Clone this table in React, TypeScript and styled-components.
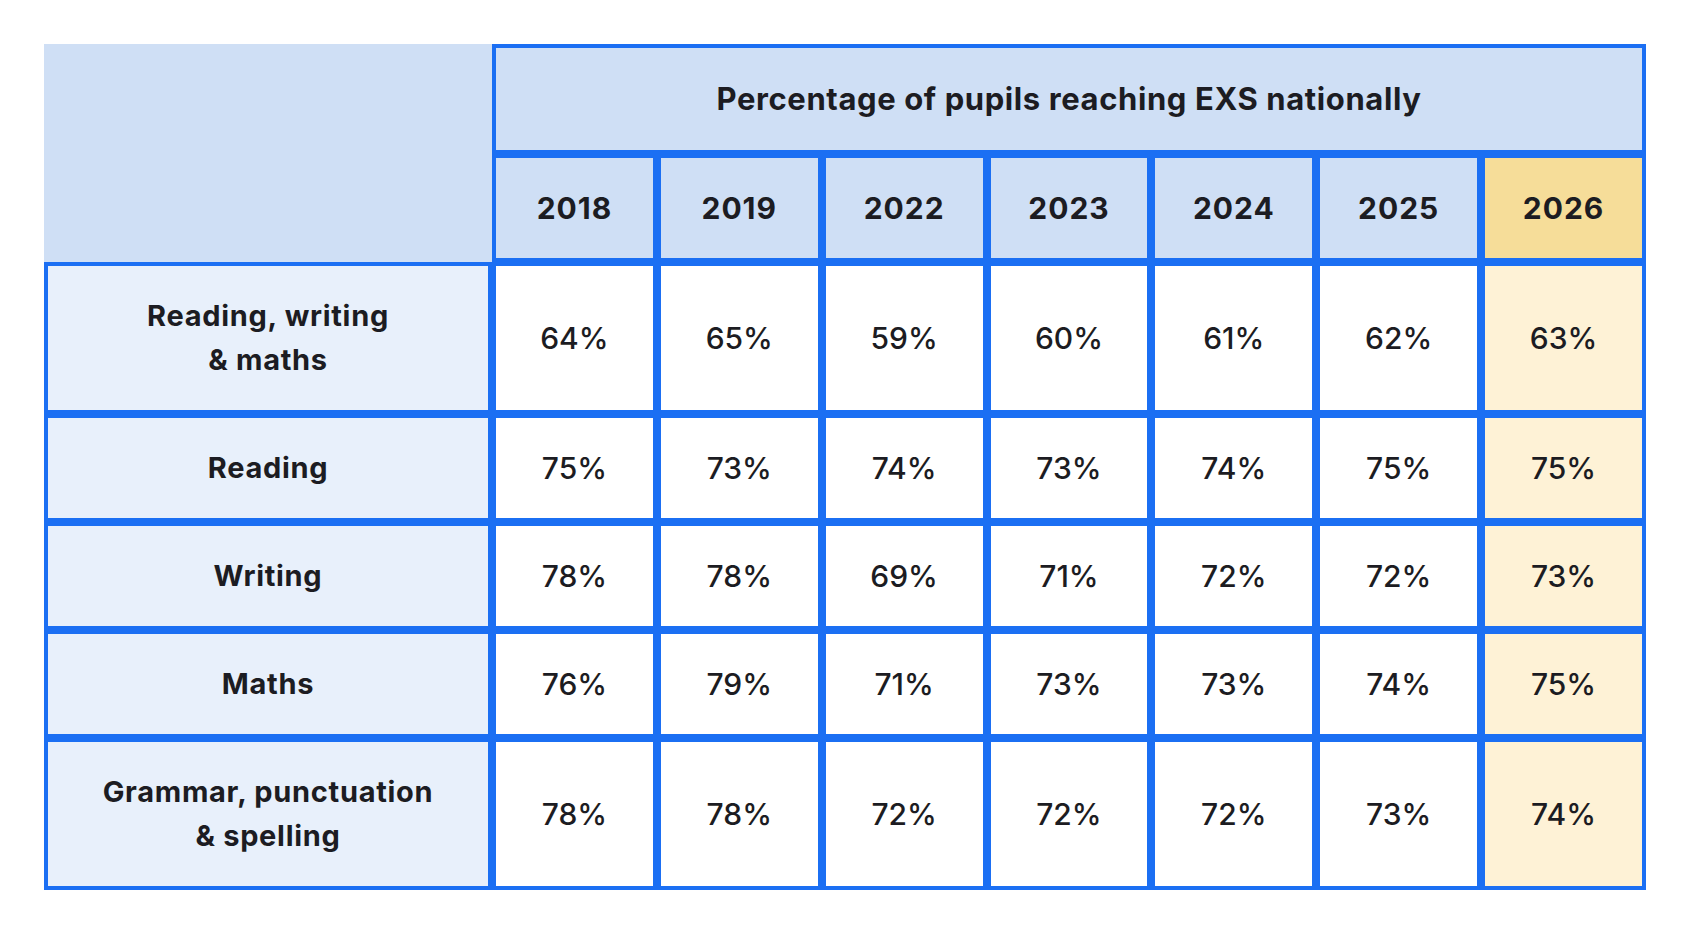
import React from "react";
import styled, { createGlobalStyle } from "styled-components";

const Global = createGlobalStyle`
  html, body { margin: 0; padding: 0; background: #ffffff; }
  body { font-family: "Inter", sans-serif; color: #1c1c22; }
`;

const BLUE = "#1b6ff3";

const Page = styled.div`
  padding: 44px 44px 0 44px;
`;

const Table = styled.table`
  width: 1602px;
  table-layout: fixed;
  border-collapse: separate;
  border-spacing: 0;
`;

const Corner = styled.th`
  background: #cfdff5;
  border: none;
  padding: 0;
`;

const Title = styled.th`
  background: #cfdff5;
  border: 4px solid ${BLUE};
  padding: 29px 0;
  font-family: "Inter", sans-serif;
  font-weight: 700;
  font-size: 31px;
  letter-spacing: 0.6px;
  line-height: 44px;
  text-align: center;
`;

const Year = styled.th<{ $hl?: boolean }>`
  background: ${(p) => (p.$hl ? "#f6dd99" : "#cfdff5")};
  border: 4px solid ${BLUE};
  padding: 28px 0;
  font-family: "Inter", sans-serif;
  font-weight: 700;
  font-size: 30px;
  letter-spacing: 1px;
  line-height: 44px;
  text-align: center;
`;

const RowHead = styled.th`
  background: #e8f0fb;
  border: 4px solid ${BLUE};
  padding: 28px 0;
  font-family: "Inter", sans-serif;
  font-weight: 700;
  font-size: 29px;
  letter-spacing: 0.7px;
  line-height: 44px;
  text-align: center;
  white-space: pre-line;
`;

const Cell = styled.td<{ $hl?: boolean }>`
  background: ${(p) => (p.$hl ? "#fef2d6" : "#ffffff")};
  border: 4px solid ${BLUE};
  padding: 28px 0;
  font-family: "Inter", sans-serif;
  font-weight: 500;
  font-size: 30px;
  line-height: 44px;
  text-align: center;
`;

const years = ["2018", "2019", "2022", "2023", "2024", "2025", "2026"];

const rows: { label: string; values: string[] }[] = [
  { label: "Reading, writing\n& maths", values: ["64%", "65%", "59%", "60%", "61%", "62%", "63%"] },
  { label: "Reading", values: ["75%", "73%", "74%", "73%", "74%", "75%", "75%"] },
  { label: "Writing", values: ["78%", "78%", "69%", "71%", "72%", "72%", "73%"] },
  { label: "Maths", values: ["76%", "79%", "71%", "73%", "73%", "74%", "75%"] },
  { label: "Grammar, punctuation\n& spelling", values: ["78%", "78%", "72%", "72%", "72%", "73%", "74%"] },
];

export default function App() {
  return (
    <>
      <Global />
      <Page>
        <Table>
          <colgroup>
            <col style={{ width: 448 }} />
            {years.map((y) => (
              <col key={y} />
            ))}
          </colgroup>
          <thead>
            <tr>
              <Corner rowSpan={2} />
              <Title colSpan={7}>Percentage of pupils reaching EXS nationally</Title>
            </tr>
            <tr>
              {years.map((y, i) => (
                <Year key={y} $hl={i === years.length - 1}>
                  {y}
                </Year>
              ))}
            </tr>
          </thead>
          <tbody>
            {rows.map((r) => (
              <tr key={r.label}>
                <RowHead>{r.label}</RowHead>
                {r.values.map((v, i) => (
                  <Cell key={i} $hl={i === r.values.length - 1}>
                    {v}
                  </Cell>
                ))}
              </tr>
            ))}
          </tbody>
        </Table>
      </Page>
    </>
  );
}
